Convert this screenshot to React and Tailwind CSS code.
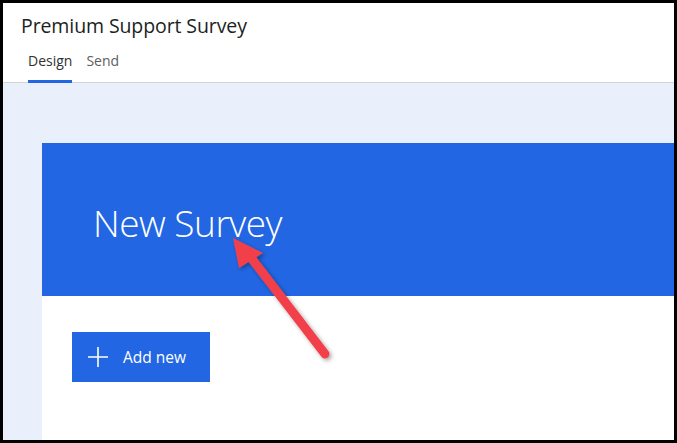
import React from "react";

export default function App() {
  return (
    <div className="w-[677px] h-[443px] border-[3px] border-black bg-white relative overflow-hidden flex flex-col" style={{ fontFamily: '"Open Sans", "Noto Sans", sans-serif' }}>
      <div className="h-[80px] border-b border-[#d4d4d4] pl-[18px] flex flex-col">
        <div className="pt-[10px] text-[19.5px] leading-[26px] text-[#201f1e] font-medium tracking-[-0.1px]">Premium Support Survey</div>
        <div className="flex gap-[14px] pl-[7px] mt-[12px] text-[14px] leading-[19px]">
          <div className="flex flex-col">
            <span className="text-[#323130]">Design</span>
            <div className="h-[3px] bg-[#2266e3] mt-[10px]" />
          </div>
          <span className="text-[#605e5c]">Send</span>
        </div>
      </div>
      <div className="flex-1 bg-[#e9f0fc] pl-[39px] pt-[60px] flex flex-col">
        <div className="h-[153px] bg-[#2266e3] pl-[51px] pt-[55px]">
          <div className="text-white text-[37px] leading-[50px] font-light tracking-[-0.5px]">New Survey</div>
        </div>
        <div className="flex-1 bg-white pl-[30px] pt-[36px]">
          <button className="w-[138px] h-[50px] bg-[#2266e3] text-white flex items-center pl-[15px] gap-[14px]">
            <svg width="22" height="22" viewBox="0 0 22 22" fill="none" stroke="white" strokeWidth="1.6">
              <path d="M11 1v20M1 11h20" />
            </svg>
            <span className="text-[15.5px] font-medium leading-[20px]">Add new</span>
          </button>
        </div>
      </div>
      <svg className="absolute left-0 top-0 pointer-events-none" width="677" height="443" viewBox="0 0 677 443">
        <defs>
          <filter id="sh" x="-20%" y="-20%" width="140%" height="140%">
            <feDropShadow dx="2" dy="2" stdDeviation="2" floodColor="#000" floodOpacity="0.35" />
          </filter>
        </defs>
        <g filter="url(#sh)" transform="translate(-3,-3)">
          <line x1="325" y1="354" x2="252" y2="259" stroke="#f1414a" strokeWidth="9" strokeLinecap="round" />
          <polygon points="233,238 263,253 239,268" fill="#f1414a" />
        </g>
      </svg>
    </div>
  );
}
